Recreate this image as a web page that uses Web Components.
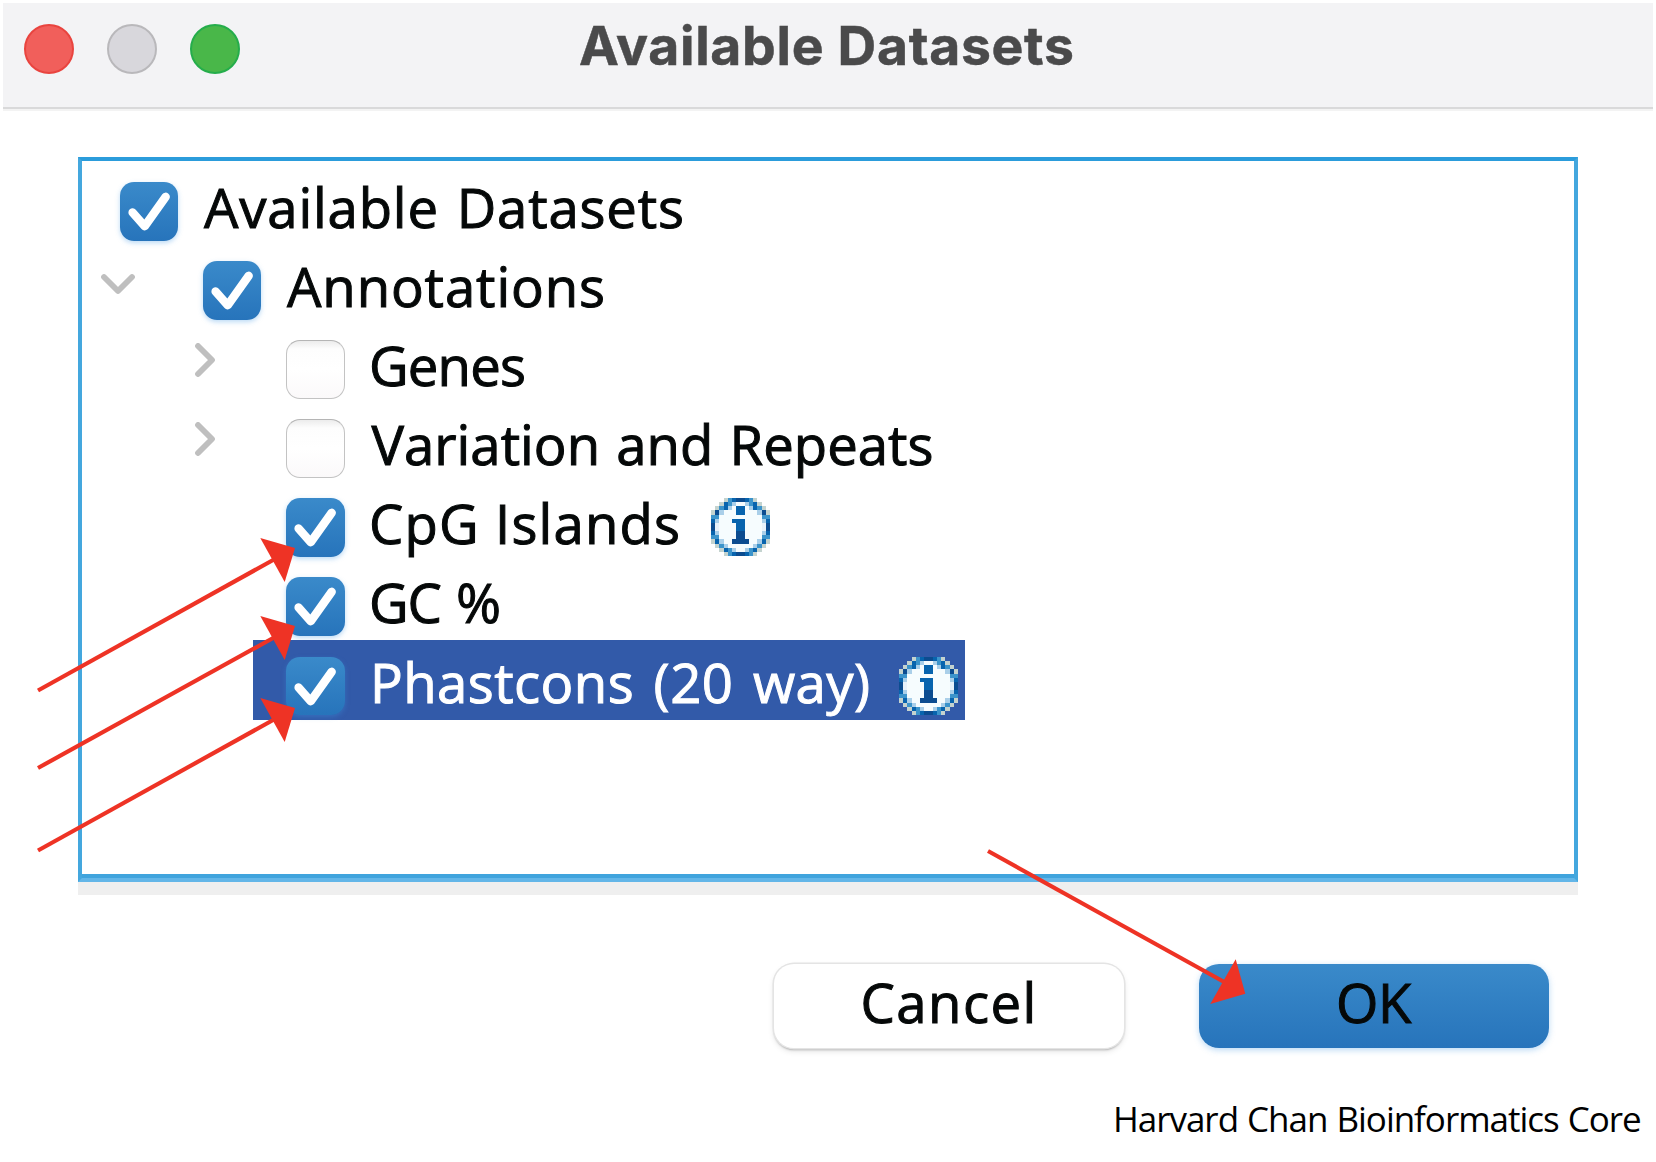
<!DOCTYPE html>
<html lang="en">
<head>
<meta charset="utf-8">
<title>Available Datasets</title>
<style>
  html, body { margin: 0; background: #fff; }
  body { width: 1656px; height: 1162px; overflow: hidden; font-family: "Open Sans", "Noto Sans", sans-serif; color: #050808; }
</style>
</head>
<body>
<datasets-dialog></datasets-dialog>
<script>
const define = (name, html, setup) => {
  const tpl = document.createElement('template');
  tpl.innerHTML = html;
  customElements.define(name, class extends HTMLElement {
    connectedCallback() {
      if (this.shadowRoot) return;
      this.attachShadow({ mode: 'open' }).append(tpl.content.cloneNode(true));
      if (setup) setup(this, this.shadowRoot);
    }
  });
};

/* One line of text, tracked so that its glyphs span exactly `span` pixels;
   `gap` widens each word space. */
define('tracked-text', `
  <style>:host{display:block;line-height:1.362;flex:none}span{display:block;white-space:pre}</style>
  <span><slot></slot></span>`, (el, root) => {
  const text = el.textContent, span = +el.getAttribute('span'), gap = +(el.getAttribute('gap') || 0);
  const cs = getComputedStyle(el);
  const ctx = document.createElement('canvas').getContext('2d');
  ctx.font = `${cs.fontWeight} ${cs.fontSize} ${cs.fontFamily}`;
  const m = ctx.measureText(text);
  const ink = m.actualBoundingBoxRight + m.actualBoundingBoxLeft + gap * (text.split(' ').length - 1);
  el.style.width = span + 'px';
  const s = root.querySelector('span');
  s.style.wordSpacing = gap + 'px';
  s.style.letterSpacing = (span - ink) / (text.length - 1) + 'px';
  s.style.marginLeft = m.actualBoundingBoxLeft + 'px';
});

define('window-light', `
  <style>:host{display:block;box-sizing:border-box;width:50px;height:50px;border-radius:50%;background:var(--fill);border:2px solid var(--rim)}</style>`);

define('title-bar', `
  <style>
    :host{display:grid;grid-template-columns:1fr auto 1fr;box-sizing:border-box;height:108px;margin:3px 3px 0;background:#f3f3f5;border-bottom:2px solid #f3f3f3;box-shadow:inset 0 -2px #d9d9da}
    .lights{display:flex;gap:33px;padding:21px 0 0 21px}
    .title{padding-top:7px;margin-left:-4px;font:700 53.5px/1.362 Inter,sans-serif;color:#4a4a4b;-webkit-text-stroke:.5px}
  </style>
  <div class="lights">
    <window-light style="--fill:#f15f5b;--rim:#e9443f"></window-light>
    <window-light style="--fill:#d8d7dc;--rim:#b9b8bb"></window-light>
    <window-light style="--fill:#49b749;--rim:#25ad4b"></window-light>
  </div>
  <div class="title"><tracked-text span="492">Available Datasets</tracked-text></div>`);

define('check-box', `
  <style>
    :host{display:block;flex:none;box-sizing:border-box;width:58.5px;height:58.5px;border-radius:14px;border:1.5px solid #c3c3c3;border-top-color:#b5b5b5;background:linear-gradient(#ececec,#fdfdfd 14%,#fff 50%,#fbf9fa)}
    svg{display:none}
    :host([checked]){border:0;background:linear-gradient(#3a8aca,#2774bb);box-shadow:0 2px 5px rgba(60,150,225,.35)}
    :host([checked]) svg{display:block}
  </style>
  <svg width="58.5" height="58.5" viewBox="0 0 58.5 58.5" fill="none" stroke="#fff" stroke-width="8.4" stroke-linecap="round" stroke-linejoin="round"><path d="M12.6 30.5 24.7 44.2 45.7 14.8"/></svg>`);

define('disclosure-arrow', `
  <style>:host{display:block;flex:none;width:34px;height:34px}:host([open]) svg{transform:rotate(90deg)}svg{display:block}</style>
  <svg width="34" height="34" viewBox="0 0 34 34" fill="none" stroke="#bfbfbf" stroke-width="5.8" stroke-linecap="round" stroke-linejoin="round"><path d="M10 3 24 17 10 31"/></svg>`);

/* Low-resolution information badge, one rect for each cell of a 14 x 14 grid. */
define('info-badge', `
  <style>:host{display:block;flex:none;width:59px;height:58px}svg{display:block}</style>
  <svg width="59" height="58" viewBox="0 0 14 14" preserveAspectRatio="none" shape-rendering="crispEdges"></svg>`, (el, root) => {
  const rows = [
    '...TMBDDBMT...',
    '..TBMLWWLMBT..',
    '.TMBLWBBWLBMT.',
    'TDLWWWBBWWWLDT',
    'MMWWWWWWWWWWMM',
    'BLWWWBBBWWWWLB',
    'DPWWWWBBWWWWPD',
    'DPWWWWBBWWWWPD',
    'BLWWWWDDWWWWLB',
    'MMWWWWDDWWWWMM',
    'TBLWWDDDDWWLBT',
    '.TMLWWWWWWLMT.',
    '..TBMLWWLMBT..',
    '...TMBDDBMT...'];
  const ink = { T: '#c4d3cf', M: '#3c94cb', B: '#0864ae', D: '#0c4c90', L: '#aacfe9', P: '#e8f2fb', W: '#f6fcfe' };
  root.querySelector('svg').innerHTML = rows.map((r, y) => [...r].map((c, x) =>
    ink[c] ? `<rect x="${x}" y="${y}" width="1" height="1" fill="${ink[c]}"/>` : '').join('')).join('');
});

define('tree-row', `
  <style>
    :host{display:flex;height:79.1px;align-items:flex-start;font-size:54.5px;font-weight:500;-webkit-text-stroke:1px}
    .twist{display:flex;justify-content:flex-end;flex:none;width:var(--indent)}
    .cell{display:flex;flex:none;align-items:flex-start;height:80px;padding:0 7.5px 0 33px}
    :host([selected]) .cell{background:#325aa9;color:#fff}
    check-box{margin-top:17px}
    .label{padding:5px 0 0 26px}
    ::slotted(info-badge){margin:17px 0 0 var(--gap)}
  </style>
  <div class="twist"><slot name="twist"></slot></div>
  <div class="cell"><check-box></check-box><div class="label"><slot></slot></div><slot name="info"></slot></div>`,
  (el, root) => {
    if (el.hasAttribute('checked')) root.querySelector('check-box').setAttribute('checked', '');
  });

define('dataset-tree', `
  <style>
    :host{display:block;box-sizing:border-box;width:1500px;height:738px;margin:46px 0 0 78px;border-bottom:13px solid #efefef}
    .frame{box-sizing:border-box;height:725px;padding-top:4px;border:4px solid #44a7de;border-top-color:#2b9cdb;border-bottom:4px solid #63b6e8;box-shadow:inset 0 -4px #40a4dd}
  </style>
  <div class="frame">
    <tree-row checked style="--indent:4.5px"><tracked-text span="478" gap="3">Available Datasets</tracked-text></tree-row>
    <tree-row checked style="--indent:87.5px"><disclosure-arrow slot="twist" open style="margin:22.5px 34.5px 0 0"></disclosure-arrow><tracked-text span="316">Annotations</tracked-text></tree-row>
    <tree-row style="--indent:171px"><disclosure-arrow slot="twist" style="margin:19.5px 31px 0 0"></disclosure-arrow><tracked-text span="152" style="margin-left:1.5px">Genes</tracked-text></tree-row>
    <tree-row style="--indent:171px"><disclosure-arrow slot="twist" style="margin:19.5px 31px 0 0"></disclosure-arrow><tracked-text span="560" gap="2" style="margin-left:1px">Variation and Repeats</tracked-text></tree-row>
    <tree-row checked style="--indent:171px;--gap:32.5px"><tracked-text span="306" style="margin-left:1.5px">CpG Islands</tracked-text><info-badge slot="info"></info-badge></tree-row>
    <tree-row checked style="--indent:171px"><tracked-text span="127" gap="2" style="margin-left:1.5px">GC %</tracked-text></tree-row>
    <tree-row checked selected style="--indent:171px;--gap:30.5px"><tracked-text span="493" gap="5" style="margin-left:4.5px">Phastcons (20 way)</tracked-text><info-badge slot="info"></info-badge></tree-row>
  </div>`);

define('push-button', `
  <style>
    :host{display:flex;box-sizing:border-box;justify-content:center;width:350px;height:84px;border-radius:20px;font-size:54.5px;font-weight:500;-webkit-text-stroke:1px;background:#fff;box-shadow:0 0 0 1.5px #e4e4e4,0 2px 2px #aaa,0 3px 6px rgba(0,0,0,.12)}
    :host([primary]){background:linear-gradient(#3a8aca,#2774bb);box-shadow:0 2px 6px rgba(60,150,225,.35)}
    div{padding-top:1px}
  </style>
  <div><slot></slot></div>`);

/* Red pointers drawn over the window. */
define('pointer-overlay', `
  <style>:host{display:block;position:absolute;left:0;top:0;pointer-events:none}svg{display:block}</style>
  <svg width="1656" height="1162" fill="#ee3325" stroke="none">
    <path d="M38 690.5 274 559.5" stroke="#ee3325" stroke-width="4.2"/><path d="M295 548 260.3 538 284.7 582Z"/>
    <path d="M38 768 274 637.5" stroke="#ee3325" stroke-width="4.2"/><path d="M295 626 260.3 616 284.7 660Z"/>
    <path d="M38 850.5 274 719.5" stroke="#ee3325" stroke-width="4.2"/><path d="M295 708 260.3 698 284.7 742Z"/>
    <path d="M988 851 1226 983" stroke="#ee3325" stroke-width="4.2"/><path d="M1245.3 993.7 1235.7 959.3 1210.3 1004Z"/>
  </svg>`);

define('datasets-dialog', `
  <style>
    :host{display:flow-root;width:1656px;height:1162px}
    .actions{display:flex;justify-content:flex-end;gap:75px;padding:69px 107px 0 0}
    .credit{display:flex;justify-content:flex-end;padding:47px 16px 0 0;font-size:35px;color:#000}
  </style>
  <title-bar></title-bar>
  <dataset-tree></dataset-tree>
  <div class="actions">
    <push-button><tracked-text span="169" style="margin-right:2px">Cancel</tracked-text></push-button>
    <push-button primary><tracked-text span="73" style="margin-left:3px">OK</tracked-text></push-button>
  </div>
  <div class="credit"><tracked-text span="524" gap="1">Harvard Chan Bioinformatics Core</tracked-text></div>
  <pointer-overlay></pointer-overlay>`);
</script>
</body>
</html>
